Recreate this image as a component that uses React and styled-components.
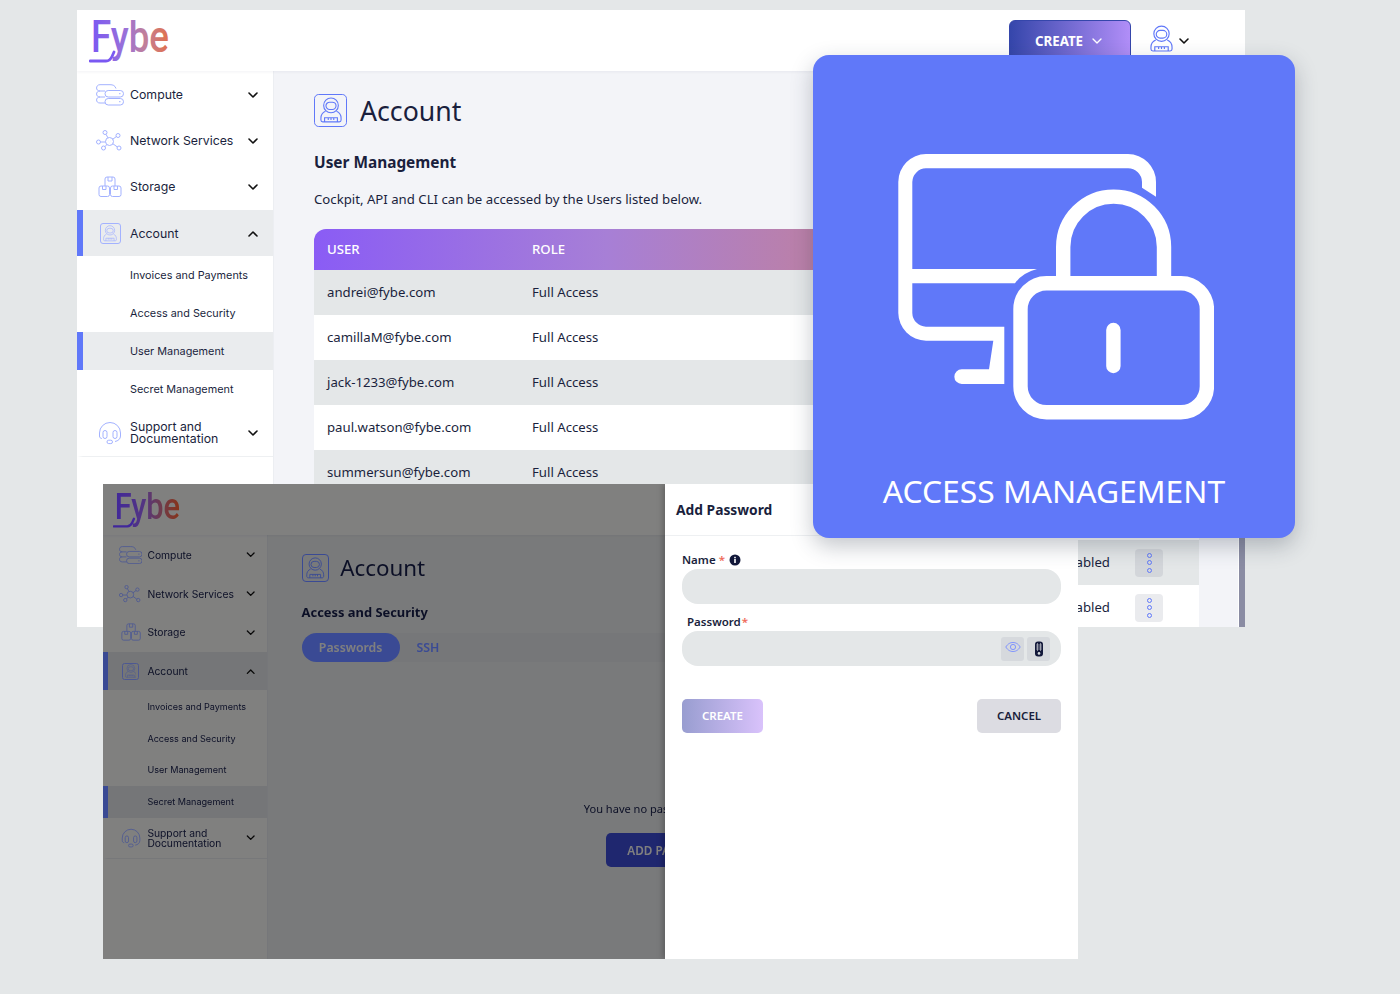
import React from 'react';
import styled, { createGlobalStyle } from 'styled-components';
import { ChevronDown, ChevronUp } from 'lucide-react';

const GlobalStyle = createGlobalStyle`
  html, body { margin: 0; padding: 0; background: #e4e7e8; }
  body { font-family: 'Noto Sans', sans-serif; color: #1a1f3d; }
`;

const Canvas = styled.div`
  position: relative;
  width: 1400px;
  height: 994px;
  overflow: hidden;
  background: #e4e7e8;
`;

// the three overlapping windows sit on a free canvas
const MainWindow = styled.div`
  position: absolute;
  left: 77px;
  top: 10px;
  width: 1168px;
  height: 617px;
  overflow: hidden;
  --accent: #6078f9;
  --accent-soft: #a3b2ff;
  --content: #f3f4f8;
`;

const DimWindow = styled.div`
  position: absolute;
  left: 103px;
  top: 484px;
  width: 975px;
  height: 475px;
  overflow: hidden;
  --accent: #8096f8;
  --accent-soft: #a3b2ff;
  --content: #f3f4f5;
`;

const DimShell = styled.div`
  zoom: 0.838;
  width: 1164px;
  height: 567px;
  filter: brightness(0.5) saturate(1.5);
`;

const Shell = styled.div`
  display: grid;
  grid-template-columns: 197px 1fr;
  grid-template-rows: 61px 1fr;
  height: 100%;
  background: var(--content);
`;

const Header = styled.header`
  grid-column: 1 / 3;
  display: flex;
  align-items: flex-start;
  justify-content: space-between;
  padding: 10px 53px 0 12px;
  background: #fff;
  position: relative;
  box-shadow: 0 1px 3px rgba(30, 40, 80, 0.06);
`;

const HeaderRight = styled.div`
  display: flex;
  align-items: center;
  gap: 19px;
`;

const CreateButton = styled.button`
  display: flex;
  align-items: center;
  justify-content: center;
  gap: 6px;
  width: 122px;
  height: 42px;
  padding: 0;
  border: 1px solid #3546ab;
  border-radius: 6px;
  background: linear-gradient(90deg, #3546ab, #b18ef8);
  color: #fff;
  font-family: 'Noto Sans', sans-serif;
  font-size: 13.3px;
  font-weight: 700;
`;

const UserMenu = styled.div`
  display: flex;
  align-items: center;
  gap: 3px;
  color: #111;
`;

const Side = styled.nav`
  background: #fff;
  border-right: 1px solid #eceef2;
  font-family: Inter, sans-serif;
`;

const NavItem = styled.div`
  display: grid;
  grid-template-columns: 47px 1fr 20px;
  align-items: center;
  height: ${p => (p.$tall ? '49px' : '46.3px')};
  padding: 1px 8px 0 0;
  box-sizing: border-box;
  background: ${p => (p.$active ? '#eaecee' : '#fff')};
  border-left: 6px solid ${p => (p.$active ? 'var(--accent)' : '#fff')};
  ${p => p.$tall && 'border-bottom: 1px solid #eef0f2;'}
  font-size: 12.3px;
  line-height: 12px;
  color: #1a1f3d;
`;

const NavIcon = styled.span`
  display: flex;
  justify-content: center;
  padding-left: 7px;
  color: var(--accent-soft);
`;

const SubItem = styled.div`
  display: flex;
  align-items: center;
  height: 38px;
  padding-left: 47px;
  box-sizing: border-box;
  background: ${p => (p.$active ? '#eaecee' : '#fff')};
  border-left: 6px solid ${p => (p.$active ? 'var(--accent)' : '#fff')};
  font-size: 10.85px;
  color: #1a1f3d;
`;

const ContentRow = styled.div`
  display: flex;
  min-width: 0;
  min-height: 0;
`;

const Content = styled.main`
  flex: 1;
  min-width: 0;
  padding: 22px 40px 0;
`;

const ScrollTrack = styled.div`
  width: 6px;
  border-left: 1px solid #fff;
  background: #8a8ca3;
`;

const TitleRow = styled.div`
  display: flex;
  align-items: center;
  gap: 13px;
  height: 34px;
  color: var(--accent);
`;

const Title = styled.h1`
  margin: 0;
  font-size: 26.7px;
  font-weight: 400;
  color: #1a1f3d;
`;

const Subtitle = styled.h2`
  margin: 24px 0 0;
  font-size: 15.4px;
  line-height: 24px;
  font-weight: 700;
`;

const Lead = styled.p`
  margin: 14px 0 0;
  font-size: 13.2px;
  line-height: 20px;
`;

const Table = styled.div`
  width: 885px;
  margin-top: 20px;
  font-size: 13.2px;
`;

const HeadRow = styled.div`
  display: grid;
  grid-template-columns: 205px 528px 75px 28px;
  align-items: center;
  height: 41px;
  padding: 0 0 2px 13px;
  box-sizing: border-box;
  border-radius: 12px 12px 0 0;
  background: linear-gradient(90deg, #8a5cf5 0, #a77fd6 33%, #bb80a8 56%, #e0724f 100%);
  color: #fff;
  font-weight: 500;
`;

const Row = styled.div`
  display: grid;
  grid-template-columns: 205px 528px 75px 28px;
  align-items: center;
  height: 45px;
  padding-left: 13px;
  background: ${p => (p.$even ? '#e4e7e8' : '#fff')};
`;

const CellText = styled.span`
  margin-top: -2px;
`;

const Kebab = styled.span`
  display: flex;
  flex-direction: column;
  align-items: center;
  justify-content: center;
  gap: 2.5px;
  width: 28px;
  height: 28px;
  border-radius: 4px;
  background: ${p => (p.$even ? '#d3d6da' : '#eaebee')};
`;

const Ring = styled.i`
  width: 3px;
  height: 3px;
  border: 1.5px solid var(--accent);
  border-radius: 50%;
`;

const TabBar = styled.div`
  display: flex;
  align-items: center;
  gap: 20px;
  height: 35px;
  margin-top: 13px;
  border-radius: 18px;
  background: #eceef0;
  font-size: 14.7px;
  font-weight: 600;
  color: var(--accent);
`;

const TabPill = styled.span`
  display: flex;
  align-items: center;
  justify-content: center;
  width: 117px;
  height: 35px;
  border-radius: 18px;
  background: var(--accent);
  color: #fff;
`;

const EmptyState = styled.div`
  display: flex;
  flex-direction: column;
  align-items: center;
  gap: 21px;
  margin-top: 165px;
  font-size: 13.2px;
`;

const AddButton = styled.span`
  display: flex;
  align-items: center;
  justify-content: center;
  width: 160px;
  height: 40px;
  border-radius: 6px;
  background: #4650b0;
  color: #fff;
  font-size: 14px;
  font-weight: 600;
`;

const Drawer = styled.aside`
  position: absolute;
  right: 0;
  top: 0;
  width: 413px;
  height: 100%;
  background: #fff;
  box-shadow: -2px 0 6px rgba(0, 0, 0, 0.25);
`;

const DrawerHead = styled.div`
  display: flex;
  align-items: center;
  height: 52px;
  padding-left: 11px;
  box-sizing: border-box;
  border-bottom: 1px solid #eef0f2;
  font-size: 13.8px;
  font-weight: 700;
`;

const DrawerBody = styled.div`
  padding: 15px 17px 0;
`;

const Label = styled.label`
  display: flex;
  align-items: center;
  gap: ${p => (p.$inset ? '0' : '4px')};
  height: 17px;
  margin-bottom: 1px;
  padding-left: ${p => (p.$inset ? '5px' : '0')};
  font-size: 11.5px;
  font-weight: 600;
`;

const Star = styled.span`
  margin-left: ${p => (p.$tight ? '1px' : '-1px')};
  color: #ef6b5b;
`;

const Field = styled.div`
  display: flex;
  align-items: center;
  justify-content: flex-end;
  gap: 3px;
  height: 35px;
  margin-bottom: 9px;
  padding-right: 11px;
  border-radius: 16px;
  background: #e4e7e8;
`;

const FieldButton = styled.span`
  display: flex;
  align-items: center;
  justify-content: center;
  width: 23px;
  height: 24px;
  border-radius: 3px;
  background: #d6d9dd;
  color: ${p => p.$color};
`;

const Actions = styled.div`
  display: flex;
  justify-content: space-between;
  margin-top: 33px;
`;

const ActionButton = styled.span`
  display: flex;
  align-items: center;
  justify-content: center;
  width: ${p => (p.$primary ? '81px' : '84px')};
  height: 34px;
  padding-bottom: 1px;
  box-sizing: border-box;
  border-radius: 5px;
  background: ${p => (p.$primary ? 'linear-gradient(90deg, #989dd0, #d9c2fb)' : '#dcdce2')};
  color: ${p => (p.$primary ? '#fff' : '#1a1f3d')};
  font-size: 11.5px;
  font-weight: 600;
`;

const PromoCard = styled.section`
  position: absolute;
  left: 813px;
  top: 55px;
  width: 482px;
  height: 483px;
  display: flex;
  flex-direction: column;
  align-items: center;
  padding-top: 99px;
  box-sizing: border-box;
  border-radius: 16px;
  background: #6078f9;
  box-shadow: 0 8px 22px rgba(40, 50, 70, 0.28);
  color: #fff;
`;

const PromoIcon = styled.svg`
  margin-left: 4px;
`;

const PromoText = styled.div`
  margin-top: 48px;
  font-size: 31.8px;
  font-weight: 400;
  line-height: 46px;
  white-space: nowrap;
`;

const Logo = () => (
  <svg width="82" height="44" viewBox="0 0 82 44">
    <defs>
      <linearGradient id="fybeGrad" x1="0" x2="1" y1="0" y2="0">
        <stop offset="0" stopColor="#7a58f2" />
        <stop offset="0.45" stopColor="#9a72d8" />
        <stop offset="0.7" stopColor="#c27f98" />
        <stop offset="1" stopColor="#e2704a" />
      </linearGradient>
    </defs>
    <text x="2" y="32" fontFamily="Roboto, sans-serif" fontWeight="500" fontSize="44" textLength="78" lengthAdjust="spacingAndGlyphs" fill="url(#fybeGrad)">Fybe</text>
    <path d="M1 41 H17 Q21 41 23 36.5 L25 32" fill="none" stroke="#7a58f2" strokeWidth="2.8" strokeLinecap="round" />
  </svg>
);

const ServerIcon = () => (
  <svg width="28" height="22" viewBox="0 0 28 22" fill="none" stroke="currentColor" strokeWidth="1">
    <rect x="9" y="6.5" width="18.5" height="6.5" rx="3.2" />
    <rect x="9" y="14.5" width="18.5" height="6.5" rx="3.2" />
    <path d="M20 4.5 C19 1.5 17 .7 14 .7 H4 C1.5 .7 .6 2.5 .6 4 C.6 5.5 1.5 7 4 7 H9 M4 7 C1.5 7 .6 8.5 .6 10 C.6 11.5 1.5 13 4 13 H9 M4 13 C1.5 13 .6 14.5 .6 16 C.6 17.5 1.5 19 4 19 H9" />
    <path d="M23 9.7h1.5M23 17.7h1.5" />
  </svg>
);

const NetworkIcon = () => (
  <svg width="28" height="22" viewBox="0 0 28 22" fill="none" stroke="currentColor" strokeWidth="1">
    <circle cx="13.5" cy="11.5" r="4" />
    <circle cx="9" cy="2.5" r="2" />
    <circle cx="22" cy="5.5" r="2" />
    <circle cx="23" cy="18" r="2" />
    <circle cx="7.5" cy="18" r="2" />
    <circle cx="2.5" cy="12" r="2" />
    <path d="M10 4.3l2 3.6M20.3 6.6l-3.6 2.7M21.4 17l-4.6-3.3M9 16.7l1.8-2.2M4.5 12h5" />
    <path d="M12.5 11h.1M14.5 11h.1M13.5 13h.1" strokeWidth="1.4" />
  </svg>
);

const StorageIcon = () => (
  <svg width="24" height="22" viewBox="0 0 24 22" fill="none" stroke="currentColor" strokeWidth="1">
    <path d="M7 10V3a2 2 0 0 1 2-2h6a2 2 0 0 1 2 2v7" />
    <path d="M10 1v4h4V1" />
    <rect x="1" y="10" width="10.5" height="10.5" rx="2" />
    <rect x="12.5" y="10" width="10.5" height="10.5" rx="2" />
    <path d="M4.5 10v3.5h3.5V10M16 10v3.5h3.5V10" />
  </svg>
);

const Astronaut = ({ size = 24 }) => (
  <svg width={size} height={size * 1.18} viewBox="0 0 24 28" fill="none" stroke="currentColor" strokeWidth="1.2">
    <circle cx="12" cy="9" r="8" />
    <rect x="6.5" y="5.5" width="11" height="8" rx="4" />
    <path d="M6 15.5 C2.5 17 1 20 1 23 V25 C1 26 1.7 27 3 27 H21 C22.3 27 23 26 23 25 V23 C23 20 21.5 17 18 15.5" />
    <path d="M5 27 V22.5 H19 V27 M9 22.5V25M12 22.5V25M15 22.5V25" />
  </svg>
);

const BoxedAstronaut = styled.span`
  display: flex;
  align-items: center;
  justify-content: center;
  flex-shrink: 0;
  width: ${p => p.$size}px;
  height: ${p => p.$size}px;
  box-sizing: border-box;
  border: 1.2px solid currentColor;
  border-radius: ${p => p.$size / 7}px;
`;

const HeadsetIcon = () => (
  <svg width="24" height="24" viewBox="0 0 24 24" fill="none" stroke="currentColor" strokeWidth="1">
    <path d="M1.5 15 V12 A10.5 10.5 0 0 1 22.5 12 V15 C22.5 18 20 20 17 20.5" />
    <rect x="5" y="9.5" width="4" height="8" rx="2" />
    <rect x="15" y="9.5" width="4" height="8" rx="2" />
    <path d="M1.5 15 C1.5 16.5 2.5 17.5 3.8 17.5" />
    <rect x="9" y="19.2" width="5.5" height="3.4" rx="1.7" />
  </svg>
);

const Chevron = ({ up }) => (up
  ? <ChevronUp size={16} strokeWidth={2.4} color="#111" />
  : <ChevronDown size={16} strokeWidth={2.4} color="#111" />);

const SUB_ITEMS = ['Invoices and Payments', 'Access and Security', 'User Management', 'Secret Management'];

const Sidebar = ({ activeSub }) => (
  <Side>
    <NavItem><NavIcon><ServerIcon /></NavIcon>Compute<Chevron /></NavItem>
    <NavItem><NavIcon><NetworkIcon /></NavIcon>Network Services<Chevron /></NavItem>
    <NavItem><NavIcon><StorageIcon /></NavIcon>Storage<Chevron /></NavItem>
    <NavItem $active>
      <NavIcon><BoxedAstronaut $size={21}><Astronaut size={14} /></BoxedAstronaut></NavIcon>
      Account
      <Chevron up />
    </NavItem>
    {SUB_ITEMS.map(name => (
      <SubItem key={name} $active={name === activeSub}>{name}</SubItem>
    ))}
    <NavItem $tall>
      <NavIcon><HeadsetIcon /></NavIcon>
      <span>Support and<br />Documentation</span>
      <Chevron />
    </NavItem>
  </Side>
);

const PageTitle = () => (
  <TitleRow>
    <BoxedAstronaut $size={33}><Astronaut size={22} /></BoxedAstronaut>
    <Title>Account</Title>
  </TitleRow>
);

const ROWS = [
  { user: 'andrei@fybe.com', role: 'Full Access' },
  { user: 'camillaM@fybe.com', role: 'Full Access' },
  { user: 'jack-1233@fybe.com', role: 'Full Access' },
  { user: 'paul.watson@fybe.com', role: 'Full Access' },
  { user: 'summersun@fybe.com', role: 'Full Access' },
  { user: '', role: '' },
  { user: '', role: '', status: 'Enabled' },
  { user: '', role: '', status: 'Enabled' },
];

const AccessIcon = () => (
  <PromoIcon width="316" height="266" viewBox="898 154 316 266">
    <path
      fill="#fff"
      d="M926 154 H1128 A28 28 0 0 1 1156 182 V196.7 L1142 187.7 V182 A14 14 0 0 0 1128 168.3 H926 A14 14 0 0 0 912.3 182 V269 H1037 Q1022 273 1015 283.3 H912.3 V313 A14 14 0 0 0 926 326.7 H1004.3 V384 H961.7 A7.3 7.3 0 0 1 961.7 369.3 H989 L993.3 340.7 H926 A28 28 0 0 1 898.3 313 V182 A28 28 0 0 1 926 154 Z"
    />
    <g fill="none" stroke="#fff" strokeWidth="14.4">
      <rect x="1020.5" y="283.2" width="186.4" height="129" rx="26" />
      <path d="M1063.2 283 V247 A50.4 50.4 0 0 1 1164 247 V283" />
      <path d="M1113.4 330 V366" strokeLinecap="round" />
    </g>
  </PromoIcon>
);

const App = () => (
  <Canvas>
    <GlobalStyle />

    <MainWindow>
      <Shell>
        <Header>
          <Logo />
          <HeaderRight>
            <CreateButton>CREATE <ChevronDown size={16} strokeWidth={2} /></CreateButton>
            <UserMenu>
              <span style={{ color: '#6078f9' }}><Astronaut size={23} /></span>
              <Chevron />
            </UserMenu>
          </HeaderRight>
        </Header>
        <Sidebar activeSub="User Management" />
        <ContentRow>
          <Content>
            <PageTitle />
            <Subtitle>User Management</Subtitle>
            <Lead>Cockpit, API and CLI can be accessed by the Users listed below.</Lead>
            <Table>
              <HeadRow><span>USER</span><span>ROLE</span></HeadRow>
              {ROWS.map((row, i) => (
                <Row key={i} $even={i % 2 === 0}>
                  <CellText>{row.user}</CellText>
                  <CellText>{row.role}</CellText>
                  <CellText>{row.status}</CellText>
                  <Kebab $even={i % 2 === 0}><Ring /><Ring /><Ring /></Kebab>
                </Row>
              ))}
            </Table>
          </Content>
          <ScrollTrack />
        </ContentRow>
      </Shell>
    </MainWindow>

    <DimWindow>
      <DimShell>
        <Shell>
          <Header><Logo /></Header>
          <Sidebar activeSub="Secret Management" />
          <Content>
            <PageTitle />
            <Subtitle>Access and Security</Subtitle>
            <TabBar>
              <TabPill>Passwords</TabPill>
              <span>SSH</span>
            </TabBar>
            <EmptyState>
              <span>You have no passwords added yet.</span>
              <AddButton>ADD PASSWORD</AddButton>
            </EmptyState>
          </Content>
        </Shell>
      </DimShell>
      <Drawer>
        <DrawerHead>Add Password</DrawerHead>
        <DrawerBody>
          <Label>
            Name <Star>*</Star>
            <svg width="12" height="12" viewBox="0 0 12 12">
              <circle cx="6" cy="6" r="5.5" fill="#12183a" />
              <rect x="5.2" y="5" width="1.6" height="4" fill="#fff" />
              <rect x="5.2" y="2.8" width="1.6" height="1.5" fill="#fff" />
            </svg>
          </Label>
          <Field />
          <Label $inset>Password<Star $tight>*</Star></Label>
          <Field>
            <FieldButton $color="#7f93ff">
              <svg width="16" height="16" viewBox="0 0 16 16" fill="none" stroke="currentColor" strokeWidth="1">
                <path d="M.8 6 C3 2.5 5.5 1.5 8 1.5 S13 2.5 15.2 6 C13 9.5 10.5 10.5 8 10.5 S3 9.5 .8 6Z" />
                <circle cx="8" cy="6" r="2.6" />
              </svg>
            </FieldButton>
            <FieldButton $color="#12183a">
              <svg width="10" height="16" viewBox="0 0 10 16">
                <rect x="1" y="0.5" width="8" height="15" rx="3" fill="currentColor" />
                <path d="M2 4h6M2 6h6M2 8h6M3.5 2v8M6.5 2v8" stroke="#d6d9dd" strokeWidth="0.6" />
                <circle cx="5" cy="12.4" r="1.3" fill="#d6d9dd" />
              </svg>
            </FieldButton>
          </Field>
          <Actions>
            <ActionButton $primary>CREATE</ActionButton>
            <ActionButton>CANCEL</ActionButton>
          </Actions>
        </DrawerBody>
      </Drawer>
    </DimWindow>

    <PromoCard>
      <AccessIcon />
      <PromoText>ACCESS MANAGEMENT</PromoText>
    </PromoCard>
  </Canvas>
);

export default App;
